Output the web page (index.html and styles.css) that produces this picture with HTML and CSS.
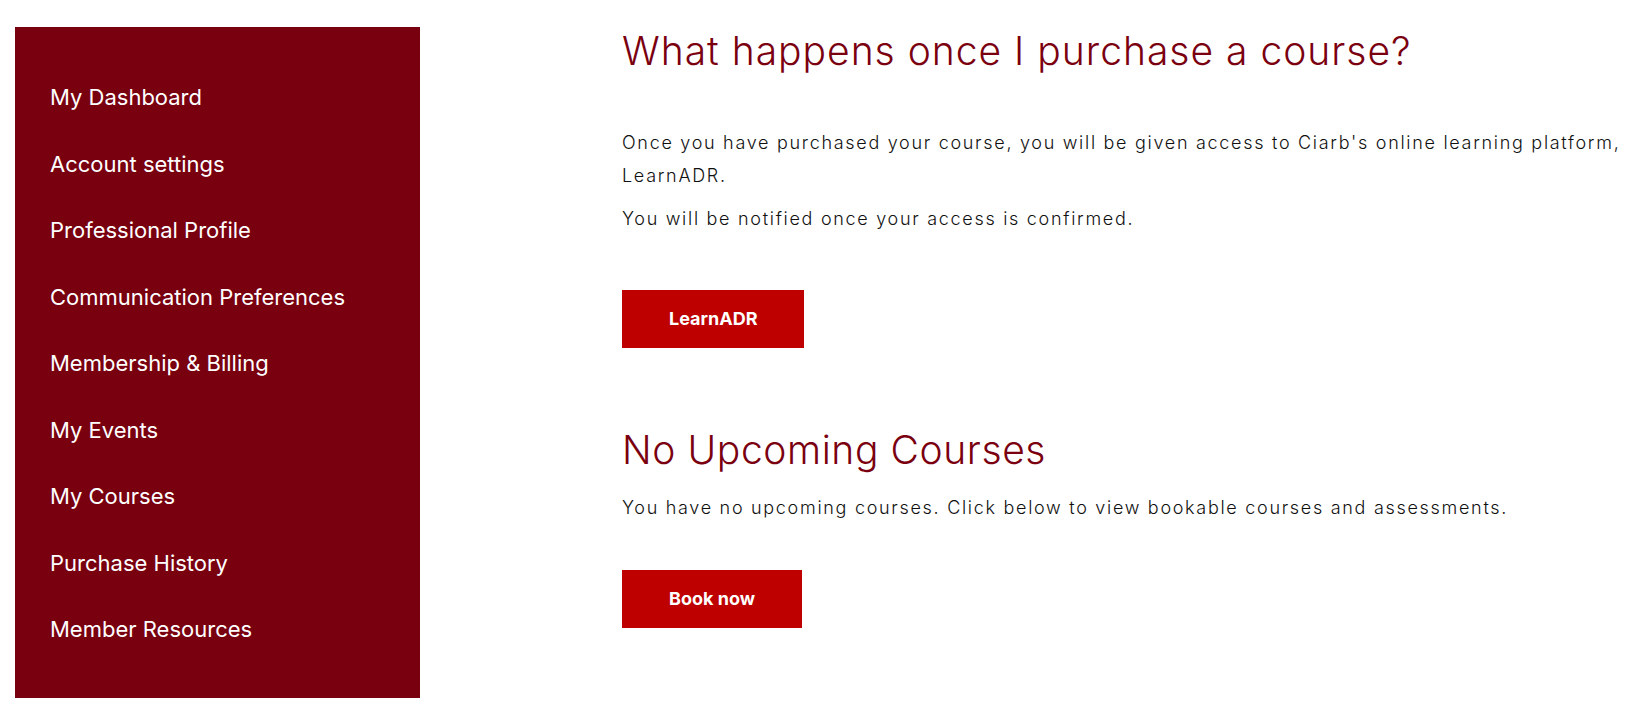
FILE: index.html
```html
<!DOCTYPE html>
<html lang="en">
<head>
    <meta charset="UTF-8">
    <title>My Courses</title>
    <link rel="stylesheet" href="styles.css">
</head>
<body>
    <div id="page">
        <div id="sidebar">
            <ul class="nav">
                <li><a href="#">My Dashboard</a></li>
                <li><a href="#">Account settings</a></li>
                <li><a href="#">Professional Profile</a></li>
                <li><a href="#">Communication Preferences</a></li>
                <li><a href="#">Membership &amp; Billing</a></li>
                <li><a href="#">My Events</a></li>
                <li><a href="#">My Courses</a></li>
                <li><a href="#">Purchase History</a></li>
                <li><a href="#">Member Resources</a></li>
            </ul>
        </div>
        <div id="content">
            <div class="section">
                <h1>What happens once I purchase a course?</h1>
                <p class="first">Once you have purchased your course, you will be given access to Ciarb's online learning platform, LearnADR.</p>
                <p>You will be notified once your access is confirmed.</p>
                <a href="#" class="btn">LearnADR</a>
            </div>
            <div class="section upcoming">
                <h2>No Upcoming Courses</h2>
                <p class="first">You have no upcoming courses. Click below to view bookable courses and assessments.</p>
                <a href="#" class="btn">Book now</a>
            </div>
        </div>
    </div>
</body>
</html>
```

FILE: styles.css
```css
*{
    margin: 0;
    padding: 0;
    box-sizing: border-box;
}
ul{
    list-style: none;
}
a{
    text-decoration: none;
}
body{
    font-family: Inter, "Noto Sans", sans-serif;
    color: #111;
    background: #fff;
}
#page{
    display: flex;
    padding: 27px 0 0 15px;
}
#sidebar{
    width: 405px;
    height: 671px;
    background: #78000f;
    padding-top: 37px;
    flex-shrink: 0;
}
.nav li a{
    display: block;
    padding-left: 35px;
    line-height: 66.5px;
    font-size: 22px;
    color: #fff;
}
#content{
    padding-left: 202px;
    flex: 1;
}
h1,h2{
    font-size: 39px;
    font-weight: 300;
    line-height: 48px;
    letter-spacing: 1px;
    color: #7a0010;
}
h2{
    letter-spacing: 0.6px;
}
p{
    font-size: 18px;
    font-weight: 300;
    line-height: 33px;
    letter-spacing: 1.7px;
    margin-top: 10px;
}
h1 + p.first{
    margin-top: 51px;
}
h2 + p.first{
    margin-top: 17px;
}
.btn{
    display: inline-block;
    height: 58px;
    line-height: 58px;
    padding: 0 47px;
    margin-top: 55px;
    background: #be0000;
    color: #fff;
    font-size: 18px;
    font-weight: 700;
}
.upcoming{
    margin-top: 78px;
}
.upcoming .btn{
    margin-top: 46px;
}
```
